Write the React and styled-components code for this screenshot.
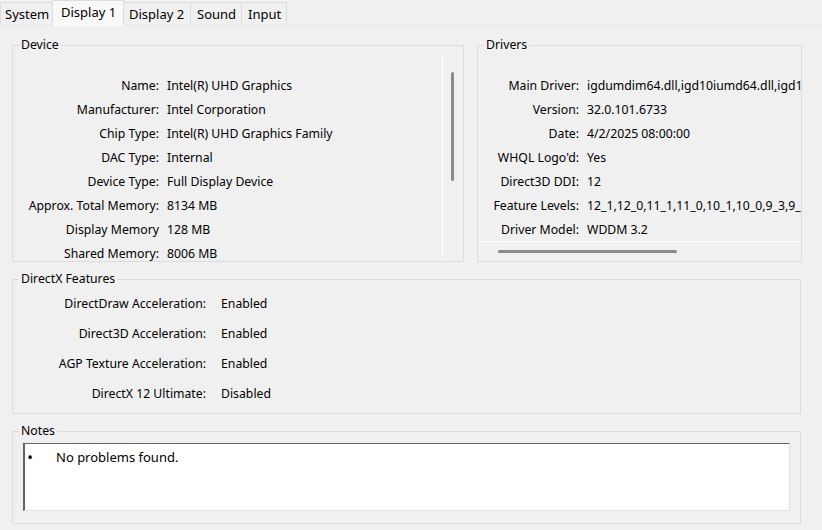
import React from 'react';
import styled, { createGlobalStyle } from 'styled-components';

const GlobalStyle = createGlobalStyle`
  body {
    margin: 0;
    background: #f0f0f0;
    font-family: "Noto Sans", "Liberation Sans", sans-serif;
    font-size: 12.25px;
    color: #000;
  }
`;

const Window = styled.div`
  width: 822px;
  height: 530px;
  overflow: hidden;
  background: #f0f0f0;
`;

const TabBar = styled.div`
  display: flex;
  align-items: flex-end;
  height: 25px;
  border-bottom: 1px solid #e6e6e6;
`;

const Tab = styled.div`
  box-sizing: border-box;
  width: ${(p) => p.$width}px;
  height: ${(p) => (p.$active ? 26 : 23)}px;
  margin-bottom: ${(p) => (p.$active ? -1 : 0)}px;
  padding-left: ${(p) => p.$pad}px;
  line-height: ${(p) => (p.$active ? 22 : 23)}px;
  font-size: 13px;
  background: ${(p) => (p.$active ? '#f9f9f9' : '#f0f0f0')};
  border: 1px solid #dcdcdc;
  border-bottom: ${(p) => (p.$active ? '1px solid #f9f9f9' : 'none')};
  border-left-width: ${(p) => (p.$first ? 1 : 0)}px;
  white-space: nowrap;
`;

const Body = styled.div`
  display: flex;
  flex-direction: column;
  gap: 9px;
  padding: 11px 21px 0 12px;
`;

const TopRow = styled.div`
  display: grid;
  grid-template-columns: 452px 325px;
  column-gap: 13px;
`;

const Group = styled.fieldset`
  margin: 0;
  padding: 0;
  border: 1px solid #dcdcdc;
  min-width: 0;
  height: ${(p) => p.$height}px;
  box-sizing: border-box;
  display: flex;
  flex-direction: ${(p) => (p.$column ? 'column' : 'row')};
  overflow: hidden;
`;

const Legend = styled.legend`
  margin-left: 6px;
  padding: 0 2px;
  line-height: 16px;
  font-size: 12.25px;
`;

const ScrollView = styled.div`
  flex: 1;
  min-width: 0;
  overflow: hidden;
  padding-top: 20px;
`;

const InfoGrid = styled.div`
  display: grid;
  grid-template-columns: ${(p) => p.$label}px max-content;
  column-gap: ${(p) => p.$gap}px;
  grid-auto-rows: ${(p) => p.$row}px;
  align-items: center;
  white-space: nowrap;
`;

const Label = styled.div`
  text-align: right;
`;

const Value = styled.div``;

const VTrack = styled.div`
  width: 20px;
  border-left: 1px solid #ffffff;
  padding-top: 19px;
`;

const VThumb = styled.div`
  width: 3px;
  height: 109px;
  margin-left: 8px;
  border-radius: 2px;
  background: #8a8a8a;
`;

const HTrack = styled.div`
  height: 20px;
  flex: none;
  border-top: 1px solid #ffffff;
  padding-top: 8px;
  box-sizing: border-box;
`;

const HThumb = styled.div`
  height: 3px;
  width: 179px;
  margin-left: 20px;
  border-radius: 2px;
  background: #8a8a8a;
`;

const FeatureList = styled.div`
  padding-top: 1px;
`;

const NotesBox = styled.div`
  margin: 4px 10px 0 10px;
  height: 68px;
  background: #ffffff;
  border-top: 1px solid #646464;
  border-left: 2px solid #646464;
  border-right: 1px solid #e3e3e3;
  border-bottom: 1px solid #e3e3e3;
  box-sizing: border-box;
  padding: 4px 0 0 2px;
  display: flex;
  gap: 23px;
  font-size: 13px;
  line-height: 18px;
`;

const Bullet = styled.span`
  width: 6px;
  text-align: center;
  font-size: 15px;
`;

const tabs = [
  { name: 'System', width: 53, pad: 4 },
  { name: 'Display 1', width: 71, pad: 8, active: true },
  { name: 'Display 2', width: 67, pad: 5 },
  { name: 'Sound', width: 51, pad: 6 },
  { name: 'Input', width: 45, pad: 6 },
];

const device = [
  ['Name:', 'Intel(R) UHD Graphics'],
  ['Manufacturer:', 'Intel Corporation'],
  ['Chip Type:', 'Intel(R) UHD Graphics Family'],
  ['DAC Type:', 'Internal'],
  ['Device Type:', 'Full Display Device'],
  ['Approx. Total Memory:', '8134 MB'],
  ['Display Memory', '128 MB'],
  ['Shared Memory:', '8006 MB'],
];

const drivers = [
  ['Main Driver:', 'igdumdim64.dll,igd10iumd64.dll,igd10iumd64.dll,igd12umd64.dll'],
  ['Version:', '32.0.101.6733'],
  ['Date:', '4/2/2025 08:00:00'],
  ["WHQL Logo'd:", 'Yes'],
  ['Direct3D DDI:', '12'],
  ['Feature Levels:', '12_1,12_0,11_1,11_0,10_1,10_0,9_3,9_2,9_1'],
  ['Driver Model:', 'WDDM 3.2'],
];

const features = [
  ['DirectDraw Acceleration:', 'Enabled'],
  ['Direct3D Acceleration:', 'Enabled'],
  ['AGP Texture Acceleration:', 'Enabled'],
  ['DirectX 12 Ultimate:', 'Disabled'],
];

function Rows({ items }) {
  return items.map(([label, value]) => (
    <React.Fragment key={label}>
      <Label>{label}</Label>
      <Value>{value}</Value>
    </React.Fragment>
  ));
}

export default function App() {
  return (
    <Window>
      <GlobalStyle />
      <TabBar>
        {tabs.map((t, i) => (
          <Tab key={t.name} $width={t.width} $pad={t.pad} $active={t.active} $first={i === 0}>
            {t.name}
          </Tab>
        ))}
      </TabBar>
      <Body>
        <TopRow>
          <Group $height={225}>
            <Legend>Device</Legend>
            <ScrollView>
              <InfoGrid $label={146} $gap={8} $row={24}>
                <Rows items={device} />
              </InfoGrid>
            </ScrollView>
            <VTrack>
              <VThumb />
            </VTrack>
          </Group>
          <Group $height={225} $column>
            <Legend>Drivers</Legend>
            <ScrollView>
              <InfoGrid $label={101} $gap={8} $row={24}>
                <Rows items={drivers} />
              </InfoGrid>
            </ScrollView>
            <HTrack>
              <HThumb />
            </HTrack>
          </Group>
        </TopRow>
        <Group $height={143} $column>
          <Legend>DirectX Features</Legend>
          <FeatureList>
            <InfoGrid $label={193} $gap={15} $row={30}>
              <Rows items={features} />
            </InfoGrid>
          </FeatureList>
        </Group>
        <Group $height={101} $column>
          <Legend>Notes</Legend>
          <NotesBox>
            <Bullet>•</Bullet>
            <span>No problems found.</span>
          </NotesBox>
        </Group>
      </Body>
    </Window>
  );
}
